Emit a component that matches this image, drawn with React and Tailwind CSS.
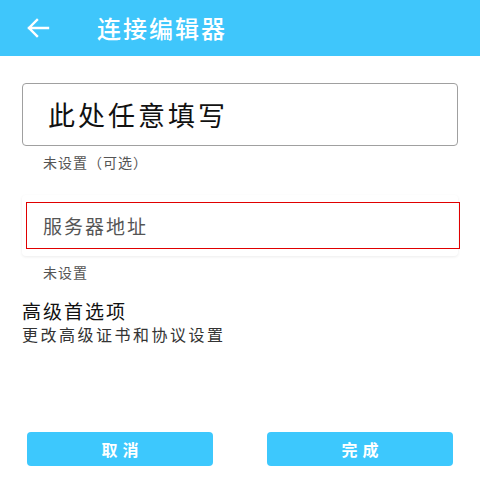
import React from "react";

export default function App() {
  const font = { fontFamily: '"Noto Sans CJK SC", "Noto Sans", sans-serif' };
  return (
    <div className="w-[480px] h-[480px] bg-white flex flex-col relative overflow-hidden" style={font}>
      <div className="h-[56px] bg-[#3fc6fb] flex items-center shrink-0">
        <svg className="ml-[26px]" width="24" height="20" viewBox="0 0 24 20" fill="none">
          <path d="M22 10H3M11 2L3 10L11 18" stroke="white" strokeWidth="2.4" strokeLinecap="square" />
        </svg>
        <div className="ml-[47px] text-white text-[24px] leading-none font-medium tracking-[2px]">连接编辑器</div>
      </div>

      <div className="px-[22px] flex flex-col">
        <div className="mt-[27px] h-[63px] border border-[#a0a0a0] rounded-[4px] flex items-center pl-[25px]">
          <span className="text-[27px] text-[#111] leading-none tracking-[3px]">此处任意填写</span>
        </div>
        <div className="mt-[8px] ml-[21px] text-[14px] text-[#555] leading-[16px] tracking-[1px]">未设置（可选）</div>

        <div className="mt-[25px] h-[61px] rounded-[4px] shadow-[0_1px_3px_rgba(0,0,0,0.08)] relative">
          <div className="absolute left-[4px] top-[7px] w-[434px] h-[47px] border border-[#e00000] flex items-center pl-[16px]">
            <span className="text-[19px] text-[#555] leading-none tracking-[2px]">服务器地址</span>
          </div>
        </div>
        <div className="mt-[8px] ml-[21px] text-[14px] text-[#555] leading-[16px] tracking-[1px]">未设置</div>

        <div className="mt-[20px] text-[19px] text-[#111] leading-[22px] tracking-[2px]">高级首选项</div>
        <div className="mt-[2px] text-[16px] text-[#333] leading-[20px] tracking-[2.5px]">更改高级证书和协议设置</div>
      </div>

      <div className="absolute left-0 right-0 top-[432px] flex justify-between px-[27px]">
        <button className="w-[186px] h-[34px] rounded-[4px] bg-[#3dc8fd] text-white text-[16px] font-bold tracking-[5px] pl-[5px]">取消</button>
        <button className="w-[186px] h-[34px] rounded-[4px] bg-[#3dc8fd] text-white text-[16px] font-bold tracking-[5px] pl-[5px]">完成</button>
      </div>
    </div>
  );
}
